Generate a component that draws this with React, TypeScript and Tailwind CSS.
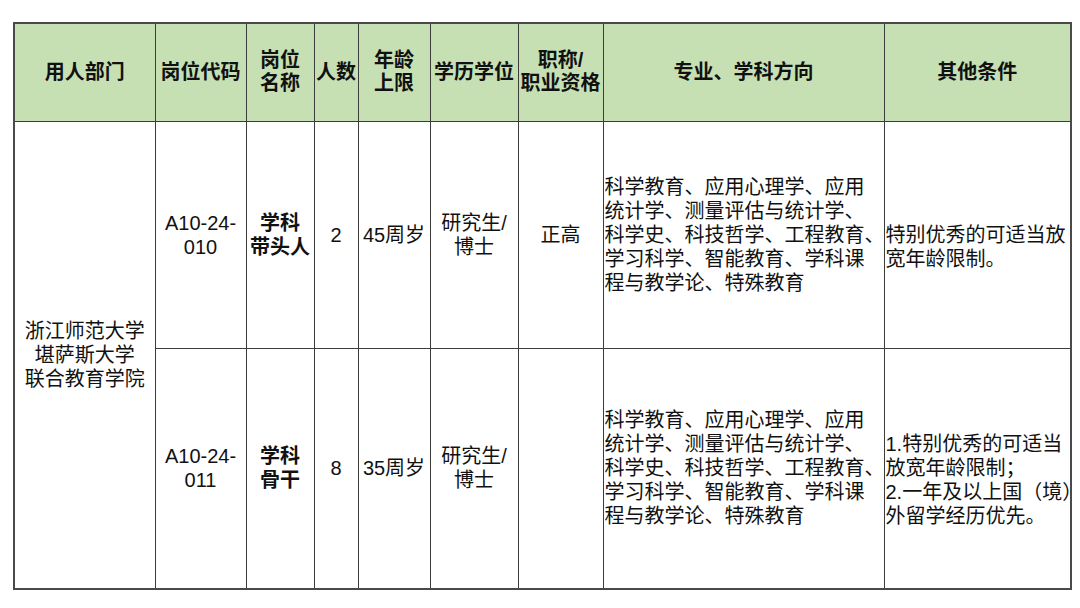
import type { ReactElement, ReactNode } from "react";

const font = {
  fontFamily: '"Liberation Sans", "Noto Sans CJK SC", sans-serif',
};

const cols = [141, 91, 68, 44, 72, 88, 85, 281, 187];

function Th({ children }: { children: ReactNode }): ReactElement {
  return (
    <th className="border border-[#3c3c3c] bg-[#c6e0b4] p-0 text-center align-middle text-[20px] font-bold leading-[23px] text-[#111]">
      {children}
    </th>
  );
}

function Td({
  children,
  left = false,
  bold = false,
  shift = false,
  rowSpan,
}: {
  children: ReactNode;
  left?: boolean;
  bold?: boolean;
  shift?: boolean;
  rowSpan?: number;
}): ReactElement {
  return (
    <td
      rowSpan={rowSpan}
      className={[
        "overflow-visible whitespace-nowrap border border-[#3c3c3c] p-0 align-middle text-[20px] leading-[24px] text-[#111]",
        left ? "pl-px text-left" : "text-center",
        bold ? "font-bold" : "font-normal",
        shift ? "pt-6" : "",
      ].join(" ")}
    >
      {children}
    </td>
  );
}

const majors = (
  <>
    科学教育、应用心理学、应用
    <br />
    统计学、测量评估与统计学、
    <br />
    科学史、科技哲学、工程教育、
    <br />
    学习科学、智能教育、学科课
    <br />
    程与教学论、特殊教育
  </>
);

export default function App(): ReactElement {
  return (
    <div className="h-[608px] w-[1080px] bg-white pl-[13px] pt-[22px]" style={font}>
      <table
        className="table-fixed border-collapse border-2 border-[#4a4a4a]"
        style={{ width: 1057 }}
      >
        <colgroup>
          {cols.map((w, i) => (
            <col key={i} style={{ width: w }} />
          ))}
        </colgroup>
        <thead>
          <tr className="h-[98px]">
            <Th>用人部门</Th>
            <Th>岗位代码</Th>
            <Th>
              岗位
              <br />
              名称
            </Th>
            <Th>人数</Th>
            <Th>
              年龄
              <br />
              上限
            </Th>
            <Th>学历学位</Th>
            <Th>
              职称/
              <br />
              职业资格
            </Th>
            <Th>专业、学科方向</Th>
            <Th>其他条件</Th>
          </tr>
        </thead>
        <tbody>
          <tr className="h-[227px]">
            <Td rowSpan={2}>
              浙江师范大学
              <br />
              堪萨斯大学
              <br />
              联合教育学院
            </Td>
            <Td>
              A10-24-
              <br />
              010
            </Td>
            <Td bold>
              学科
              <br />
              带头人
            </Td>
            <Td>2</Td>
            <Td>45周岁</Td>
            <Td>
              研究生/
              <br />
              博士
            </Td>
            <Td>正高</Td>
            <Td left>{majors}</Td>
            <Td left shift>
              特别优秀的可适当放
              <br />
              宽年龄限制。
            </Td>
          </tr>
          <tr className="h-[241px]">
            <Td>
              A10-24-
              <br />
              011
            </Td>
            <Td bold>
              学科
              <br />
              骨干
            </Td>
            <Td>8</Td>
            <Td>35周岁</Td>
            <Td>
              研究生/
              <br />
              博士
            </Td>
            <Td>{""}</Td>
            <Td left>{majors}</Td>
            <Td left shift>
              1.特别优秀的可适当
              <br />
              放宽年龄限制；
              <br />
              2.一年及以上国（境）
              <br />
              外留学经历优先。
            </Td>
          </tr>
        </tbody>
      </table>
    </div>
  );
}
